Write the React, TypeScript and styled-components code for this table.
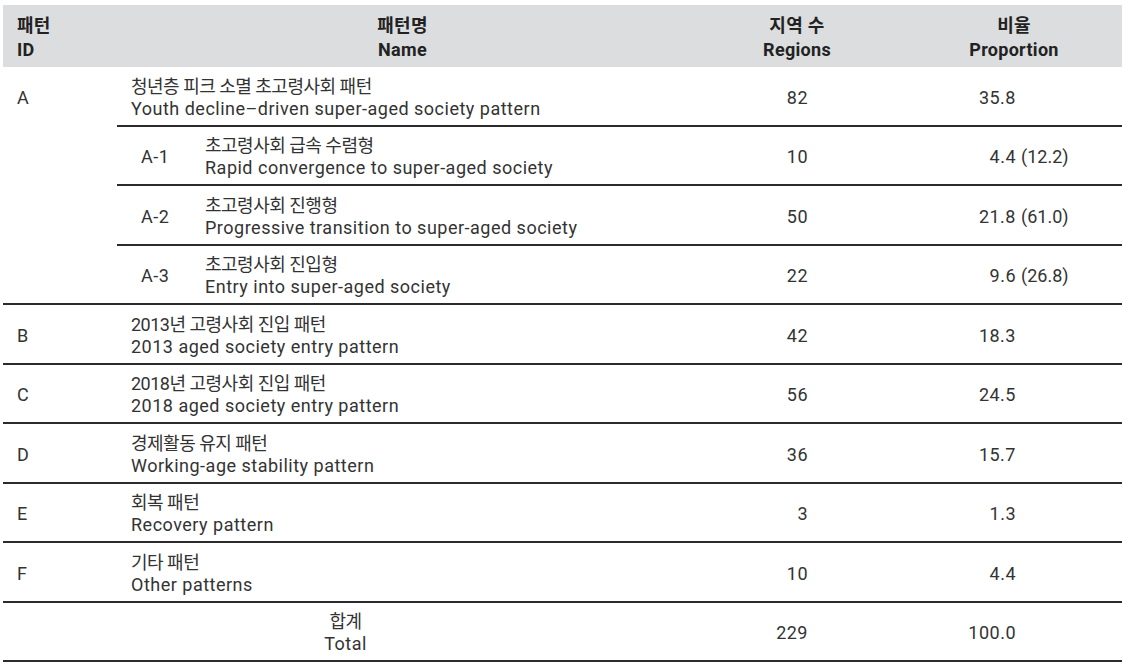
import React from "react";
import styled, { createGlobalStyle } from "styled-components";

const GlobalStyle = createGlobalStyle`
  body {
    margin: 0;
    background: #ffffff;
    font-family: Roboto, "Noto Sans CJK KR", sans-serif;
    color: #333333;
  }
`;

const COLS = "114px 571px 218px 216px";
const RULE = "2px solid #2b2b2b";

const Table = styled.div`
  width: 1119px;
  margin: 5px 0 0 3px;
`;

const HeadRow = styled.div`
  display: grid;
  grid-template-columns: ${COLS};
  height: 62px;
  box-sizing: border-box;
  padding-top: 3px;
  align-items: center;
  background: #dcdddf;
  color: #222222;
  font-weight: 700;
  font-size: 18px;
  line-height: 24px;
  letter-spacing: 0.3px;
`;

const HeadCell = styled.div<{ $left?: boolean }>`
  text-align: ${(p) => (p.$left ? "left" : "center")};
  padding-left: ${(p) => (p.$left ? "14px" : "0")};
`;

const Row = styled.div`
  display: grid;
  grid-template-columns: ${COLS};
  height: 59.5px;
  box-sizing: border-box;
  padding-top: 4px;
  align-items: center;
  border-bottom: ${RULE};
  font-size: 18px;
  line-height: 22px;
  letter-spacing: 0.5px;
`;

const Group = styled.div`
  display: grid;
  grid-template-columns: 114px 1fr;
  border-bottom: ${RULE};
  font-size: 18px;
  line-height: 22px;
  letter-spacing: 0.5px;
`;

const GroupId = styled.div`
  padding: 20px 0 0 14px;
`;

const SubRow = styled.div<{ $last?: boolean }>`
  display: grid;
  grid-template-columns: 571px 218px 216px;
  height: ${(p) => (p.$last ? "57.5px" : "59.5px")};
  box-sizing: border-box;
  padding-top: 4px;
  align-items: center;
  border-bottom: ${(p) => (p.$last ? "none" : RULE)};
`;

const IdCell = styled.div`
  padding-left: 14px;
`;

const NameCell = styled.div`
  display: flex;
  align-items: center;
  padding-left: 14px;
`;

const SubId = styled.div`
  width: 64px;
  padding-left: 10px;
`;

const Ko = styled.span`
  letter-spacing: -0.5px;
`;

const TotalCell = styled.div`
  grid-column: 1 / span 2;
  text-align: center;
`;

const Count = styled.div`
  text-align: right;
  padding-right: 98px;
`;

const Share = styled.div`
  display: grid;
  grid-template-columns: 110px auto;
  align-items: baseline;
`;

const ShareMain = styled.span`
  text-align: right;
`;

const ShareSub = styled.span`
  margin-left: 5px;
  letter-spacing: 0;
`;

type Item = {
  id: string;
  ko: string;
  en: string;
  count: number;
  share: string;
  sub?: string;
};

const main: Item = {
  id: "A",
  ko: "청년층 피크 소멸 초고령사회 패턴",
  en: "Youth decline–driven super-aged society pattern",
  count: 82,
  share: "35.8",
};

const subs: Item[] = [
  { id: "A-1", ko: "초고령사회 급속 수렴형", en: "Rapid convergence to super-aged society", count: 10, share: "4.4", sub: "(12.2)" },
  { id: "A-2", ko: "초고령사회 진행형", en: "Progressive transition to super-aged society", count: 50, share: "21.8", sub: "(61.0)" },
  { id: "A-3", ko: "초고령사회 진입형", en: "Entry into super-aged society", count: 22, share: "9.6", sub: "(26.8)" },
];

const rows: Item[] = [
  { id: "B", ko: "2013년 고령사회 진입 패턴", en: "2013 aged society entry pattern", count: 42, share: "18.3" },
  { id: "C", ko: "2018년 고령사회 진입 패턴", en: "2018 aged society entry pattern", count: 56, share: "24.5" },
  { id: "D", ko: "경제활동 유지 패턴", en: "Working-age stability pattern", count: 36, share: "15.7" },
  { id: "E", ko: "회복 패턴", en: "Recovery pattern", count: 3, share: "1.3" },
  { id: "F", ko: "기타 패턴", en: "Other patterns", count: 10, share: "4.4" },
];

const ShareCell = ({ share, sub }: { share: string; sub?: string }) => (
  <Share>
    <ShareMain>{share}</ShareMain>
    {sub && <ShareSub>{sub}</ShareSub>}
  </Share>
);

const Label = ({ ko, en }: { ko: string; en: string }) => (
  <div>
    <Ko>{ko}</Ko>
    <br />
    {en}
  </div>
);

export default function App() {
  return (
    <>
      <GlobalStyle />
      <Table>
        <HeadRow>
          <HeadCell $left>
            패턴
            <br />
            ID
          </HeadCell>
          <HeadCell>
            패턴명
            <br />
            Name
          </HeadCell>
          <HeadCell>
            지역 수
            <br />
            Regions
          </HeadCell>
          <HeadCell>
            비율
            <br />
            Proportion
          </HeadCell>
        </HeadRow>

        <Group>
          <GroupId>{main.id}</GroupId>
          <div>
            <SubRow>
              <NameCell>
                <Label ko={main.ko} en={main.en} />
              </NameCell>
              <Count>{main.count}</Count>
              <ShareCell share={main.share} />
            </SubRow>
            {subs.map((s, i) => (
              <SubRow key={s.id} $last={i === subs.length - 1}>
                <NameCell>
                  <SubId>{s.id}</SubId>
                  <Label ko={s.ko} en={s.en} />
                </NameCell>
                <Count>{s.count}</Count>
                <ShareCell share={s.share} sub={s.sub} />
              </SubRow>
            ))}
          </div>
        </Group>

        {rows.map((r) => (
          <Row key={r.id}>
            <IdCell>{r.id}</IdCell>
            <NameCell>
              <Label ko={r.ko} en={r.en} />
            </NameCell>
            <Count>{r.count}</Count>
            <ShareCell share={r.share} />
          </Row>
        ))}

        <Row>
          <TotalCell>
            <Ko>합계</Ko>
            <br />
            Total
          </TotalCell>
          <Count>229</Count>
          <ShareCell share="100.0" />
        </Row>
      </Table>
    </>
  );
}
